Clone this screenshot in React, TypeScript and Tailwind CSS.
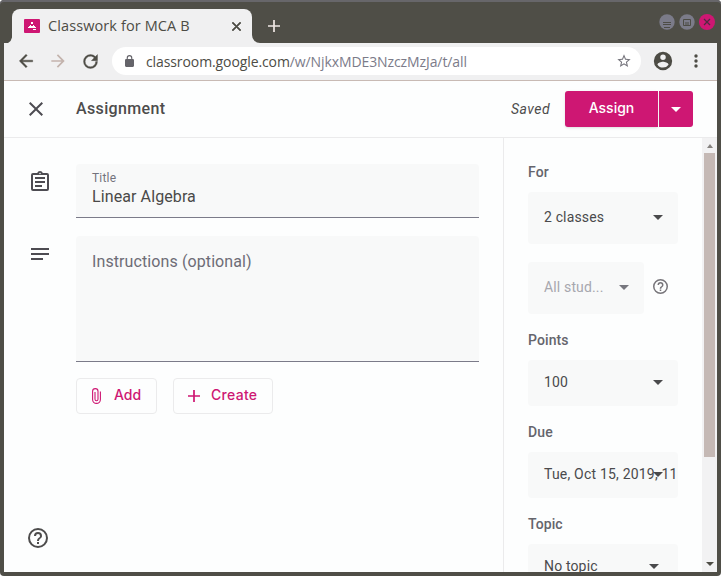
import React from "react";

type IconProps = { d: string; className?: string; box?: string };

function Icon({ d, className, box = "0 0 24 24" }: IconProps) {
  return (
    <svg viewBox={box} className={`shrink-0 ${className ?? ""}`} fill="currentColor">
      <path d={d} />
    </svg>
  );
}

const PATHS = {
  back: "M20 11H7.83l5.59-5.59L12 4l-8 8 8 8 1.41-1.41L7.83 13H20v-2z",
  forward: "M12 4l-1.41 1.41L16.17 11H4v2h12.17l-5.58 5.59L12 20l8-8z",
  reload:
    "M17.65 6.35A7.958 7.958 0 0012 4a8 8 0 108 8h-2.1A6 6 0 1112 6c1.66 0 3.14.69 4.22 1.78L13 11h7V4l-2.35 2.35z",
  lock: "M18 8h-1V6A5 5 0 007 6v2H6a2 2 0 00-2 2v10a2 2 0 002 2h12a2 2 0 002-2V10a2 2 0 00-2-2zM9 6a3 3 0 016 0v2H9V6z",
  star: "M22 9.24l-7.19-.62L12 2 9.19 8.63 2 9.24l5.46 4.73L5.82 21 12 17.27 18.18 21l-1.63-7.03L22 9.24zM12 15.4l-3.76 2.27 1-4.28-3.32-2.88 4.38-.38L12 6.1l1.71 4.04 4.38.38-3.32 2.88 1 4.28L12 15.4z",
  account:
    "M12 2a10 10 0 100 20 10 10 0 000-20zm0 3a3 3 0 110 6 3 3 0 010-6zm0 14.2a7.2 7.2 0 01-6-3.22c.03-1.99 4-3.08 6-3.08s5.97 1.09 6 3.08a7.2 7.2 0 01-6 3.22z",
  close:
    "M19 6.41L17.59 5 12 10.59 6.41 5 5 6.41 10.59 12 5 17.59 6.41 19 12 13.41 17.59 19 19 17.59 13.41 12z",
  add: "M19 13h-6v6h-2v-6H5v-2h6V5h2v6h6z",
  assignment:
    "M7 15h7v2H7zm0-4h10v2H7zm0-4h10v2H7zm12-4h-4.18a3 3 0 00-5.64 0H5a2 2 0 00-2 2v14a2 2 0 002 2h14a2 2 0 002-2V5a2 2 0 00-2-2zm-7-.25a.75.75 0 110 1.5.75.75 0 010-1.5zM19 19H5V5h14v14z",
  help: "M11 18h2v-2h-2v2zm1-16a10 10 0 100 20 10 10 0 000-20zm0 18a8 8 0 110-16 8 8 0 010 16zm0-14a4 4 0 00-4 4h2a2 2 0 114 0c0 2-3 1.75-3 5h2c0-2.25 3-2.5 3-5a4 4 0 00-4-4z",
};

function Caret({ className }: { className?: string }) {
  return (
    <svg viewBox="0 0 10 5" className={`h-[5px] w-[10px] shrink-0 ${className ?? ""}`} fill="currentColor">
      <path d="M0 0h10L5 5z" />
    </svg>
  );
}

function TitleBar() {
  return (
    <div className="flex h-[43px] shrink-0 items-start pt-[9px] pl-3 pr-[6px]">
      <div className="relative flex h-[34px] w-[240px] shrink-0 items-center rounded-t-lg bg-[#f0f0f1] pl-3 pr-[11px] font-['Open_Sans',sans-serif] text-[#4d4c45]">
        <svg viewBox="0 0 8 8" className="absolute bottom-0 -left-2 h-2 w-2 fill-[#f0f0f1]">
          <path d="M8 0v8H4a8 8 0 004-8z" />
        </svg>
        <svg viewBox="0 0 8 8" className="absolute bottom-0 -right-2 h-2 w-2 fill-[#f0f0f1]">
          <path d="M0 0v8h8a8 8 0 01-8-8z" />
        </svg>
        <svg viewBox="0 0 16 14" className="h-[14px] w-4 shrink-0">
          <rect width="16" height="14" rx="1" fill="#ce1773" />
          <path d="M7 3h2v2H7zM6 6h1v1h2V6h1v1h1v1h1v1H4V8h1V7h1zM9 10h3v1H9z" fill="#fff" />
        </svg>
        <span className="ml-2 flex-1 whitespace-nowrap text-[14.5px] tracking-[0.1px]">Classwork for MCA B</span>
        <Icon d={PATHS.close} box="5 5 14 14" className="h-[9px] w-[9px] stroke-current stroke-1" />
      </div>
      <Icon d={PATHS.add} box="5 5 14 14" className="mt-[11px] ml-4 h-3 w-3 text-[#f0e8e5]" />
      <div className="ml-auto mt-[5px] flex gap-1">
        <svg viewBox="0 0 16 16" className="h-4 w-4">
          <circle cx="8" cy="8" r="7.7" fill="#7b7b89" />
          <path d="M4 8.5h8M4 10.5h8M5 13.5h6" stroke="#4d4c45" />
        </svg>
        <svg viewBox="0 0 16 16" className="h-4 w-4">
          <circle cx="8" cy="8" r="7.7" fill="#7b7b89" />
          <path d="M4.5 5.5h7v6h-7zM7 8v3M9 8v3" fill="none" stroke="#4d4c45" />
        </svg>
        <svg viewBox="0 0 16 16" className="h-4 w-4">
          <circle cx="8" cy="8" r="8" fill="#ce1773" />
          <path d="M5 5l6 6M11 5l-6 6" stroke="#4d2c40" strokeWidth="1.2" />
        </svg>
      </div>
    </div>
  );
}

function Toolbar() {
  return (
    <div className="flex h-[38px] shrink-0 items-center border-b border-[#c8bab4] bg-[#f0f0f1] pb-px pl-3 text-[#4d4c45]">
      <Icon d={PATHS.back} className="h-[20px] w-[20px] stroke-current stroke-[0.5]" />
      <Icon d={PATHS.forward} className="ml-[12px] h-[20px] w-[20px] text-[#c3b3ad]" />
      <Icon d={PATHS.reload} className="ml-[12px] h-[21px] w-[21px] stroke-current stroke-[0.4]" />
      <div className="ml-[11px] flex h-7 w-[529px] items-center rounded-full bg-white pl-[13px] pr-[9px]">
        <Icon d={PATHS.lock} box="4 1 16 21" className="h-[12px] w-[9px] text-[#65646a]" />
        <span className="ml-3 flex-1 whitespace-nowrap font-['Open_Sans',sans-serif] text-[14px] tracking-[-0.1px] text-[#7b7b89]">
          <span className="text-[#4d4c45]">classroom.google.com</span>/w/NjkxMDE3NzczMzJa/t/all
        </span>
        <Icon d={PATHS.star} className="h-4 w-4 text-[#75747c]" />
      </div>
      <Icon d={PATHS.account} className="ml-[11px] h-[22px] w-[22px]" />
      <svg viewBox="0 0 4 14" className="ml-5 h-[14px] w-1 fill-current">
        <circle cx="2" cy="2" r="1.7" />
        <circle cx="2" cy="7" r="1.7" />
        <circle cx="2" cy="12" r="1.7" />
      </svg>
    </div>
  );
}

function Header() {
  return (
    <div className="flex h-[57px] shrink-0 items-center border-b border-[#ebebec] pl-[25px] pr-6">
      <Icon d={PATHS.close} box="5 5 14 14" className="h-[14px] w-[14px] text-[#4d4c52]" />
      <h1 className="ml-[33px] flex-1 text-[16px] font-medium tracking-[0.35px] text-[#4d4c4c]">Assignment</h1>
      <span className="mr-[15px] text-[14px] italic tracking-[0.45px] text-[#4d4c4c]">Saved</span>
      <button className="h-9 w-[93px] rounded-l-[3px] bg-[#ce1773] pb-[3px] font-['Inter',sans-serif] text-[14px] font-medium text-white shadow-sm">
        Assign
      </button>
      <button className="ml-px flex h-9 w-[34px] items-center justify-center rounded-r-[3px] bg-[#ce1773] text-white">
        <Caret className="w-[9px]" />
      </button>
    </div>
  );
}

function Form() {
  return (
    <main className="flex w-[499px] shrink-0 flex-col pt-[26px] pl-[25px] pr-6 pb-6">
      <div className="flex">
        <Icon d={PATHS.assignment} box="3 1 18 20" className="mt-[7px] ml-[2px] h-5 w-[18px] text-[#4d4c52]" />
        <div className="ml-[27px] h-[54px] w-[403px] rounded-t-[4px] border-b border-[#7b7b89] bg-[#f8f9f9] px-4 pt-[6px]">
          <div className="text-[12px] leading-4 tracking-[0.2px] text-[#73737d]">Title</div>
          <div className="text-[16px] leading-[22px] tracking-[0.1px] text-[#4a4948]">Linear Algebra</div>
        </div>
      </div>
      <div className="mt-[18px] flex">
        <svg viewBox="0 0 18 12" className="mt-3 ml-[2px] h-3 w-[18px] shrink-0 fill-[#4d4c52]">
          <path d="M0 0h18v2H0zM0 5h18v2H0zM0 10h12v2H0z" />
        </svg>
        <div className="ml-[27px] h-[126px] w-[403px] rounded-t-[4px] border-b border-[#7b7b89] bg-[#f8f9f9] px-4 pt-[15px] text-[16px] leading-[22px] tracking-[0.1px] text-[#6d6c76]">
          Instructions (optional)
        </div>
      </div>
      <div className="mt-4 ml-[47px] flex gap-4 font-['Inter',sans-serif] text-[14px] font-medium text-[#ce1773]">
        <button className="flex h-9 w-[81px] items-center rounded-[4px] border border-[#ebebec] pl-[15px]">
          <svg viewBox="0 0 9 16" className="h-4 w-[9px] shrink-0 fill-none stroke-current stroke-[1.1]">
            <path d="M8.4 3.5v8a3.9 3.9 0 01-7.8 0V3.3a2.7 2.7 0 015.4 0v7.9a1.5 1.5 0 01-3 0V4" />
          </svg>
          <span className="ml-[13px] pb-[3px]">Add</span>
        </button>
        <button className="flex h-9 w-[100px] items-center rounded-[4px] border border-[#ebebec] pl-[14px]">
          <Icon d={PATHS.add} box="5 5 14 14" className="h-3 w-3" />
          <span className="ml-[11px] pb-[3px] tracking-[0.3px]">Create</span>
        </button>
      </div>
      <Icon d={PATHS.help} box="2 2 20 20" className="mt-auto -ml-px h-5 w-5 text-[#4d4c4c]" />
    </main>
  );
}

function Label({ children }: { children: React.ReactNode }) {
  return <div className="text-[14px] font-medium leading-5 tracking-[0.1px] text-[#65656c]">{children}</div>;
}

function Sidebar() {
  const select =
    "relative flex shrink-0 items-center justify-between rounded-[4px] bg-[#f8f9f9] pb-[2px] pl-4 text-[#4a4a4c]";
  return (
    <aside className="flex min-w-0 flex-1 flex-col overflow-hidden border-l border-[#ebebec] pt-6 pl-6 text-[14px] tracking-[0.15px]">
      <Label>For</Label>
      <div className={`${select} mt-[10px] h-[52px] w-[150px] pr-[15px]`}>
        <span>2 classes</span>
        <Caret />
      </div>
      <div className="mt-[18px] flex shrink-0 items-center">
        <div className={`${select} h-[52px] w-[116px] pr-[15px]`}>
          <span className="text-[#a7a7ae]">All stud...</span>
          <Caret className="text-[#77777e]" />
        </div>
        <Icon d={PATHS.help} box="2 2 20 20" className="mb-[3px] ml-[9px] h-[15px] w-[15px] text-[#77757a]" />
      </div>
      <div className="mt-4"><Label>Points</Label></div>
      <div className={`${select} mt-[10px] h-[46px] w-[150px] pr-[15px]`}>
        <span>100</span>
        <Caret />
      </div>
      <div className="mt-4"><Label>Due</Label></div>
      <div className={`${select} mt-[10px] h-[46px] w-[150px] pr-[15px]`}>
        <span className="w-[119px] whitespace-nowrap tracking-[0.2px]">Tue, Oct 15, 2019, 11</span>
        <Caret className="absolute right-[15px]" />
      </div>
      <div className="mt-4"><Label>Topic</Label></div>
      <div className={`${select} mt-[10px] h-[46px] w-[150px] pr-[19px]`}>
        <span>No topic</span>
        <Caret />
      </div>
    </aside>
  );
}

function Scrollbar() {
  return (
    <div className="flex w-[15px] shrink-0 flex-col items-center bg-[#f2f2f3] text-[#4d4c45]">
      <div className="flex h-[15px] items-center">
        <svg viewBox="0 0 6 4" className="h-1 w-[6px] fill-[#85827f]"><path d="M0 4h6L3 0z" /></svg>
      </div>
      <div className="h-[304px] w-[11px] bg-[#c5b9b5]" />
      <div className="mt-auto flex h-4 items-center">
        <svg viewBox="0 0 8 4" className="h-1 w-2 fill-current"><path d="M0 0h8L4 4z" /></svg>
      </div>
    </div>
  );
}

export default function App() {
  return (
    <div className="h-[576px] w-[721px] overflow-hidden bg-white">
      <div className="flex h-full flex-col rounded-[4px] bg-[#4f4e47] font-['Roboto',sans-serif] shadow-[inset_0_2px_0_#67666a]">
        <TitleBar />
        <div className="mr-1 mb-1 ml-1 flex min-h-0 flex-1 flex-col bg-[#fdfefe]">
          <Toolbar />
          <Header />
          <div className="flex min-h-0 flex-1">
            <Form />
            <Sidebar />
            <Scrollbar />
          </div>
        </div>
      </div>
    </div>
  );
}
